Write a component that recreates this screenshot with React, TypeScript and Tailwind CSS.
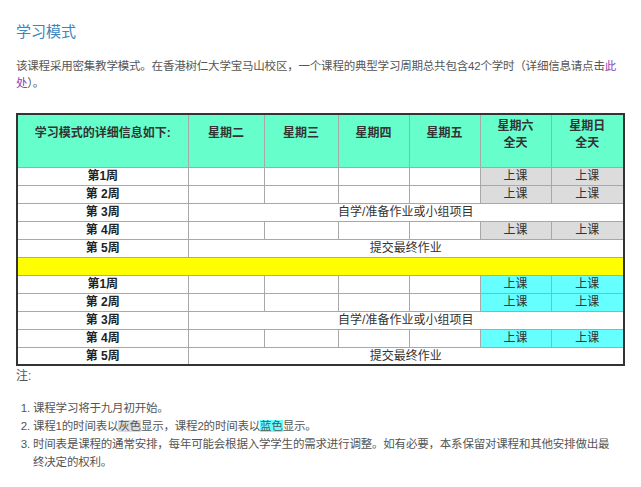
const F = { fontFamily: '"Liberation Sans", "Noto Sans CJK SC", sans-serif' };

type Row = { w: string; kind: 'class' | 'self' | 'final' };
const rows: Row[] = [
  { w: '第1周', kind: 'class' },
  { w: '第 2周', kind: 'class' },
  { w: '第 3周', kind: 'self' },
  { w: '第 4周', kind: 'class' },
  { w: '第 5周', kind: 'final' },
];

const cell = 'border border-[#a8a8a8] h-[18px] p-0 text-center leading-[16px]';

function Block({ hl }: { hl: string }) {
  return (
    <>
      {rows.map((r) => (
        <tr key={r.w}>
          <td className={`${cell} font-bold text-[#222]`}>{r.w}</td>
          {r.kind === 'class' ? (
            <>
              <td className={cell}></td>
              <td className={cell}></td>
              <td className={cell}></td>
              <td className={cell}></td>
              <td className={`${cell} ${hl}`}>上课</td>
              <td className={`${cell} ${hl}`}>上课</td>
            </>
          ) : (
            <td colSpan={6} className={cell}>
              {r.kind === 'self' ? '自学/准备作业或小组项目' : '提交最终作业'}
            </td>
          )}
        </tr>
      ))}
    </>
  );
}

export default function App() {
  return (
    <div className="w-[641px] h-[487px] bg-white text-[#444] px-4 pt-[22px]" style={F}>
      <h2 className="text-[15px] text-[#3a87c0] leading-[20px]">学习模式</h2>
      <p className="mt-[16px] text-[11.5px] tracking-[-0.2px] leading-[17px] text-[#555]">
        该课程采用密集教学模式。在香港树仁大学宝马山校区，一个课程的典型学习周期总共包含42个学时（详细信息请点击<span className="text-[#8a3fb5]">此</span>
        <br />
        <span className="text-[#8a3fb5]">处</span>）。
      </p>
      <table className="mt-[21px] w-[608px] border-collapse border-2 border-[#333] text-[12px] text-[#333] table-fixed">
        <colgroup>
          <col className="w-[171px]" />
          <col className="w-[76px]" />
          <col className="w-[74px]" />
          <col className="w-[71px]" />
          <col className="w-[71px]" />
          <col className="w-[71px]" />
          <col className="w-[73px]" />
        </colgroup>
        <thead>
          <tr className="bg-[#66ffcc] font-bold">
            <td className="border border-[#a8a8a8] h-[53px] text-center align-top pt-[10px] leading-[17px]">学习模式的详细信息如下:</td>
            {['星期二', '星期三', '星期四', '星期五'].map((d) => (
              <td key={d} className="border border-[#a8a8a8] text-center align-top pt-[10px] leading-[17px]">{d}</td>
            ))}
            {['星期六', '星期日'].map((d) => (
              <td key={d} className="border border-[#a8a8a8] text-center align-top pt-[3px] leading-[17px]">{d}<br />全天</td>
            ))}
          </tr>
        </thead>
        <tbody>
          <Block hl="bg-[#dcdcdc]" />
          <tr><td colSpan={7} className="h-[18px] bg-[#ffff00] border border-[#a8a8a8]"></td></tr>
          <Block hl="bg-[#66ffff]" />
        </tbody>
      </table>
      <p className="mt-[2px] text-[12px] leading-[17px] text-[#555]">注:</p>
      <ol className="mt-[14px] pl-[17px] text-[11.5px] tracking-[-0.2px] leading-[18px] text-[#555] list-decimal pr-3">
        <li>课程学习将于九月初开始。</li>
        <li>课程1的时间表以<span className="bg-[#dcdcdc]">灰色</span>显示，课程2的时间表以<span className="bg-[#66ffff]">蓝色</span>显示。</li>
        <li>时间表是课程的通常安排，每年可能会根据入学学生的需求进行调整。如有必要，本系保留对课程和其他安排做出最终决定的权利。</li>
      </ol>
    </div>
  );
}
